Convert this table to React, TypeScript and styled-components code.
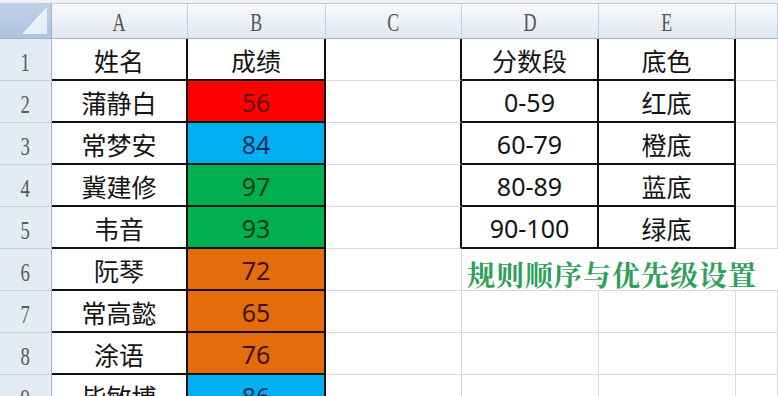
import styled, { createGlobalStyle } from "styled-components";

const GlobalStyle = createGlobalStyle`
  html, body {
    margin: 0;
    padding: 0;
    background: #ffffff;
    overflow: hidden;
  }
`;

// sheet data
const names = ["姓名", "蒲静白", "常梦安", "冀建修", "韦音", "阮琴", "常高懿", "涂语", "毕敏博"];
const scores = ["成绩", "56", "84", "97", "93", "72", "65", "76", "86"];
const ranges = ["分数段", "0-59", "60-79", "80-89", "90-100"];
const shades = ["底色", "红底", "橙底", "蓝底", "绿底"];

const palette: Record<string, { fill: string; ink: string }> = {
  red: { fill: "#ff0000", ink: "#6a0d0d" },
  blue: { fill: "#00b0f0", ink: "#102c62" },
  green: { fill: "#00b050", ink: "#0c3a1d" },
  orange: { fill: "#e46c0a", ink: "#3e1405" },
};

const band = (v: string) => {
  const n = Number(v);
  if (n >= 90) return palette.green;
  if (n >= 80) return palette.blue;
  if (n >= 60) return palette.orange;
  return palette.red;
};

const Page = styled.div`
  width: 778px;
  height: 396px;
  overflow: hidden;
  background: #ffffff;
`;

const TopStrip = styled.div`
  height: 4px;
  box-sizing: border-box;
  background: #eef0f3;
  border-bottom: 1px solid #c3ccd8;
`;

const Sheet = styled.div`
  display: grid;
  grid-template-columns: 52px 136px 138px 136px 137px 137px 1fr;
  grid-template-rows: 35px repeat(9, 42px);
`;

const Corner = styled.div`
  position: relative;
  box-sizing: border-box;
  background: linear-gradient(#bfd0e7, #aec3df);
  border-right: 1px solid #9fb5cf;
  border-bottom: 1px solid #9fb5cf;
`;

const CornerMark = styled.div`
  position: absolute;
  right: 4px;
  bottom: 4px;
  width: 25px;
  height: 27px;
  clip-path: polygon(100% 0, 100% 100%, 0 100%);
  background: linear-gradient(135deg, #f6f8fc, #e3eaf4);
`;

const ColHead = styled.div`
  box-sizing: border-box;
  display: flex;
  align-items: center;
  justify-content: center;
  padding-top: 3px;
  background: linear-gradient(#f7f9fb, #e3e8ef);
  border-right: 1px solid #c4cfdc;
  border-bottom: 1px solid #9fb5cf;
  color: #4e5560;
  font-family: "Liberation Serif", serif;
  font-size: 25px;
  span {
    display: inline-block;
    transform: scaleX(0.72);
  }
`;

const RowHead = styled.div`
  box-sizing: border-box;
  display: flex;
  align-items: flex-end;
  justify-content: center;
  padding-bottom: 3px;
  background: #e4ebf5;
  border-right: 1px solid #9fb5cf;
  border-bottom: 1px solid #c4d0de;
  color: #555b64;
  font-family: "Liberation Serif", serif;
  font-size: 25px;
  span {
    display: inline-block;
    transform: scaleX(0.75);
  }
`;

const Cell = styled.div<{ $fill?: string; $ink?: string; $right?: boolean; $bottom?: boolean }>`
  box-sizing: border-box;
  display: flex;
  align-items: center;
  justify-content: center;
  padding-top: 2px;
  background: ${(p) => p.$fill || "#ffffff"};
  color: ${(p) => p.$ink || "#141414"};
  border-right: ${(p) => (p.$right ? "2px solid #111111" : "1px solid #dadada")};
  border-bottom: ${(p) => (p.$bottom ? "2px solid #111111" : "1px solid #dadada")};
  font-family: "Noto Sans", "Noto Sans CJK SC", sans-serif;
  font-size: 25px;
  white-space: nowrap;
`;

const Note = styled.div`
  grid-column: span 3;
  box-sizing: border-box;
  display: flex;
  align-items: center;
  padding: 8px 0 0 5px;
  border-bottom: 1px solid #dadada;
  color: #2f9f5a;
  font-family: "Noto Serif CJK SC", "Noto Sans CJK SC", serif;
  font-weight: 700;
  font-size: 28px;
  letter-spacing: 1px;
  white-space: nowrap;
`;

const letters = ["A", "B", "C", "D", "E", ""];

export default function App() {
  const rows = names.map((name, i) => {
    const r = i + 1;
    const score = scores[i];
    const tone = i > 0 ? band(score) : undefined;
    const inTable = i < ranges.length;
    return [
      <RowHead key={`h${r}`}>
        <span>{r}</span>
      </RowHead>,
      <Cell key={`a${r}`} $right $bottom>
        {name}
      </Cell>,
      <Cell key={`b${r}`} $right $bottom $fill={tone?.fill} $ink={tone?.ink}>
        {score}
      </Cell>,
      <Cell key={`c${r}`} $right={inTable} />,
      r === 6 ? (
        <Note key={`d${r}`}>规则顺序与优先级设置</Note>
      ) : (
        [
          <Cell key={`d${r}`} $right={inTable} $bottom={inTable}>
            {inTable ? ranges[i] : ""}
          </Cell>,
          <Cell key={`e${r}`} $right={inTable} $bottom={inTable}>
            {inTable ? shades[i] : ""}
          </Cell>,
          <Cell key={`f${r}`} />,
        ]
      ),
    ];
  });

  return (
    <Page>
      <GlobalStyle />
      <TopStrip />
      <Sheet>
        <Corner>
          <CornerMark />
        </Corner>
        {letters.map((l, i) => (
          <ColHead key={`col${i}`}>
            <span>{l}</span>
          </ColHead>
        ))}
        {rows}
      </Sheet>
    </Page>
  );
}
